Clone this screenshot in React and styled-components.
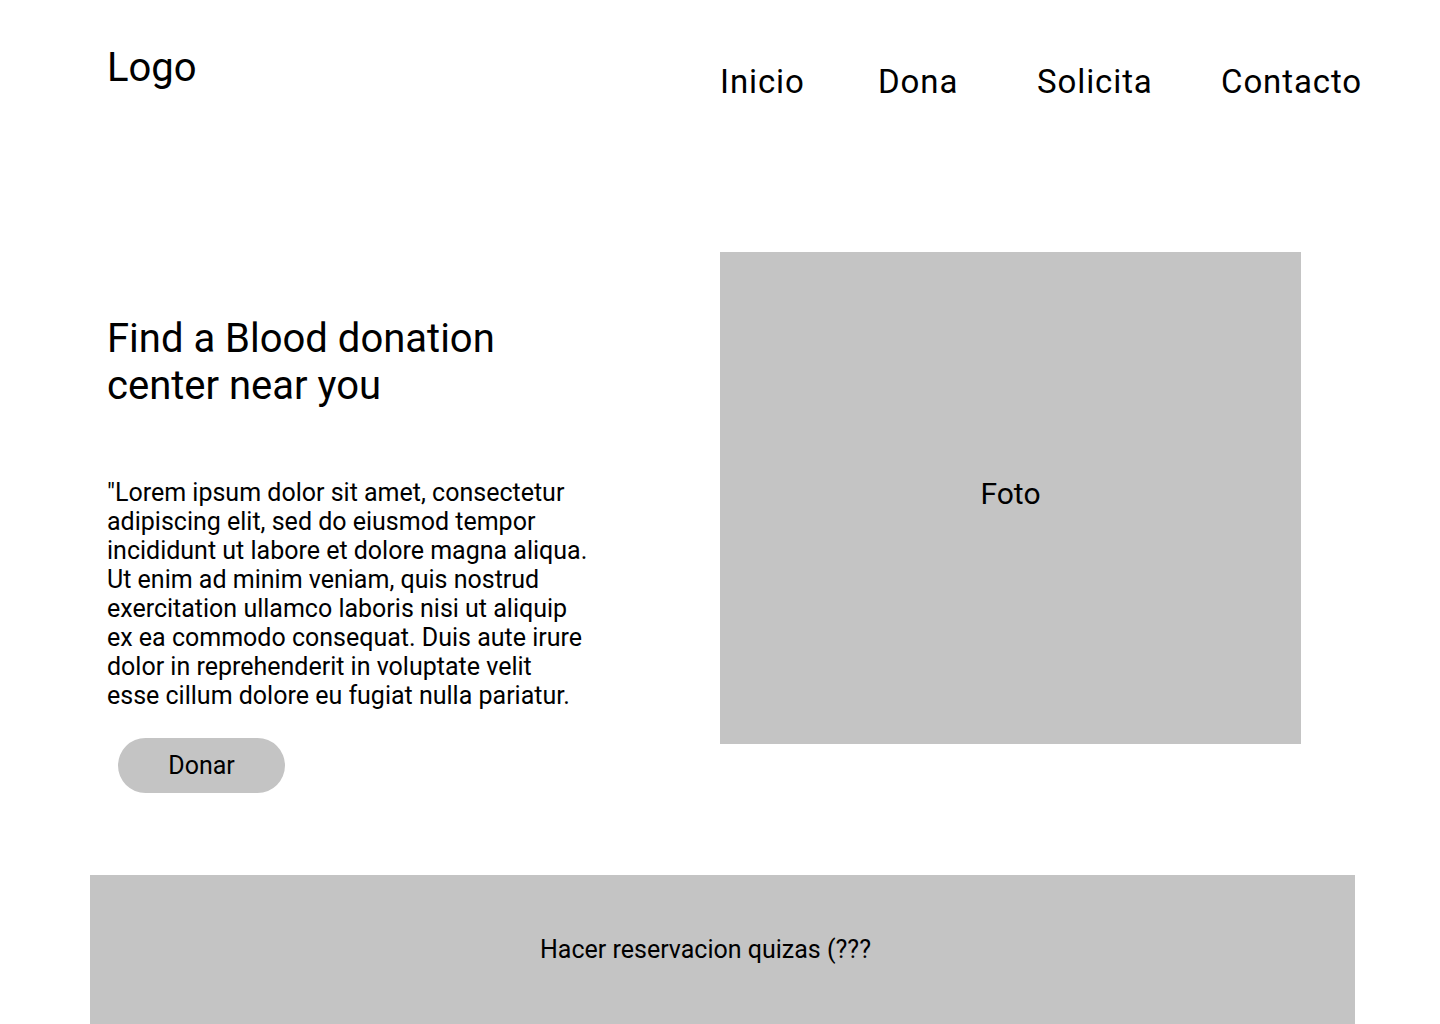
import styled, { createGlobalStyle } from "styled-components";

const GlobalStyle = createGlobalStyle`
  * { box-sizing: border-box; }
  body {
    margin: 0;
    background: #ffffff;
    font-family: Roboto, "Liberation Sans", sans-serif;
    color: #000000;
  }
`;

const Page = styled.div`
  width: 1440px;
  height: 1024px;
  overflow: hidden;
  display: flex;
  flex-direction: column;
  & > * { flex-shrink: 0; }
`;

const Header = styled.header`
  display: flex;
  justify-content: space-between;
  align-items: flex-start;
  padding: 44px 78px 0 107px;
  height: 252px;
`;

const Logo = styled.div`
  font-size: 40px;
  line-height: 48px;
`;

const Nav = styled.nav`
  display: flex;
  margin-top: 16px;
`;

const NavLink = styled.a`
  font-size: 33px;
  letter-spacing: 0.9px;
  line-height: 44px;
  width: ${(p) => p.$w}px;
  color: #000;
  text-decoration: none;
  white-space: nowrap;
`;

const Hero = styled.section`
  display: flex;
  padding-left: 107px;
`;

const Copy = styled.div`
  width: 613px;
  padding-top: 63px;
  display: flex;
  flex-direction: column;
  align-items: flex-start;
`;

const Title = styled.h1`
  margin: 0;
  font-weight: 400;
  font-size: 40px;
  line-height: 47px;
`;

const Text = styled.p`
  margin: 69px 0 0;
  width: 482px;
  font-size: 25px;
  line-height: 29px;
`;

const Button = styled.button`
  margin: 28px 0 0 11px;
  width: 167px;
  height: 55px;
  border: none;
  border-radius: 28px;
  background: #c4c4c4;
  font-family: inherit;
  font-size: 25px;
  color: #000;
`;

const Photo = styled.div`
  width: 581px;
  height: 492px;
  background: #c4c4c4;
  display: flex;
  align-items: center;
  justify-content: center;
  padding-bottom: 10px;
  font-size: 30px;
`;

const Banner = styled.section`
  margin: 82px 0 0 90px;
  width: 1265px;
  height: 160px;
  background: #c4c4c4;
  display: flex;
  justify-content: center;
  padding: 60px 34px 0 0;
  font-size: 25px;
  line-height: 29px;
`;

const links = [
  { label: "Inicio", w: 158 },
  { label: "Dona", w: 159 },
  { label: "Solicita", w: 184 },
  { label: "Contacto", w: 141 },
];

export default function App() {
  return (
    <Page>
      <GlobalStyle />
      <Header>
        <Logo>Logo</Logo>
        <Nav>
          {links.map((l) => (
            <NavLink key={l.label} href="#" $w={l.w}>
              {l.label}
            </NavLink>
          ))}
        </Nav>
      </Header>
      <Hero>
        <Copy>
          <Title>
            Find a Blood donation
            <br />
            center near you
          </Title>
          <Text>
            "Lorem ipsum dolor sit amet, consectetur adipiscing elit, sed do
            eiusmod tempor incididunt ut labore et dolore magna aliqua. Ut enim
            ad minim veniam, quis nostrud exercitation ullamco laboris nisi ut
            aliquip ex ea commodo consequat. Duis aute irure dolor in
            reprehenderit in voluptate velit esse cillum dolore eu fugiat nulla
            pariatur.
          </Text>
          <Button>Donar</Button>
        </Copy>
        <Photo>Foto</Photo>
      </Hero>
      <Banner>Hacer reservacion quizas (???</Banner>
    </Page>
  );
}
